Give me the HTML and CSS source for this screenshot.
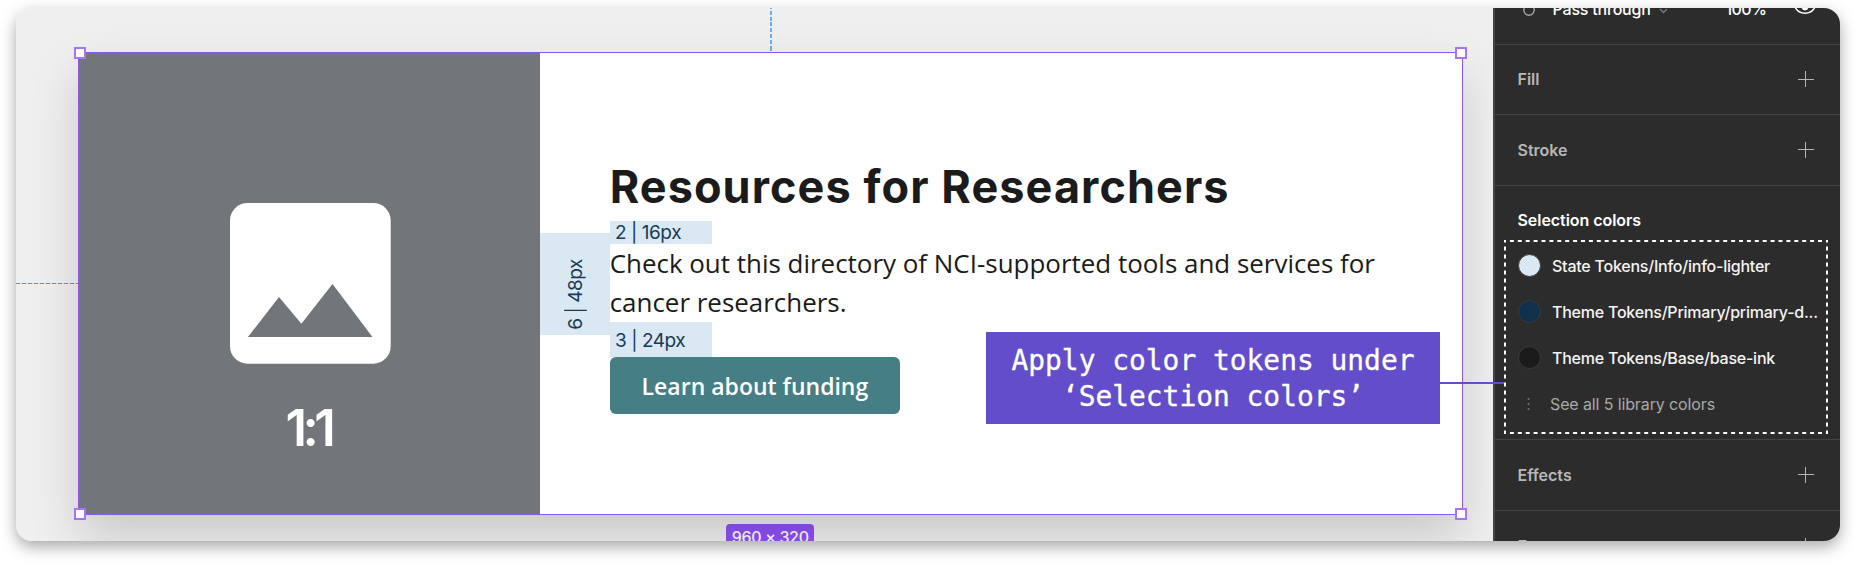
FILE: index.html
```html
<!DOCTYPE html>
<html lang="en">
<head>
<meta charset="utf-8">
<title>Selection colors</title>
<link rel="stylesheet" href="styles.css">
</head>
<body>
<main class="screen">
  <section class="canvas">
    <i class="guide guide-x"></i>
    <i class="guide guide-y"></i>
    <article class="card">
      <div class="media">
        <svg class="picture" width="161" height="161" viewBox="0 0 161 161"><rect width="160.7" height="160.7" rx="17.5" fill="#fff"/><path d="M17.9 134 49 94l22.4 26.7L102.5 81l40 53z" fill="#72767b"/></svg>
        <span class="ratio">1:1</span>
      </div>
      <div class="gutter"><div class="space space-side"><span>6 | 48px</span></div></div>
      <div class="content">
        <h1 class="title">Resources for Researchers</h1>
        <div class="space space-two">2 | 16px</div>
        <p class="copy">Check out this directory of NCI-supported tools and services for<br>cancer researchers.</p>
        <div class="space space-three">3 | 24px</div>
        <a class="button">Learn about funding</a>
      </div>
      <div class="selection"><i class="handle nw"></i><i class="handle ne"></i><i class="handle sw"></i><i class="handle se"></i></div>
    </article>
    <div class="size"><span>960 × 320</span></div>
  </section>
  <aside class="panel">
    <div class="row blend">
      <svg class="drop" width="14" height="20" viewBox="0 0 14 20"><path d="M7 2C5 6 1.8 9 1.8 13a5.2 5.2 0 0 0 10.4 0C12.200 9 9 6 7 2z" fill="none" stroke="#a5a5a5" stroke-width="1.4"/></svg>
      <span class="mode">Pass through</span>
      <svg class="chevron" width="9" height="6" viewBox="0 0 9 6"><path d="M1 1l3.500 3.500L8 1" fill="none" stroke="#7d7d7d" stroke-width="1.300"/></svg>
      <span class="opacity">100%</span>
      <svg class="eye" width="22" height="16" viewBox="0 0 22 16"><path d="M1 8c2-4 6-6.500 10-6.500S19 4 21 8c-2 4-6 6.200-10 6.200S3 12 1 8z" fill="none" stroke="#fff" stroke-width="1.500"/><circle cx="11" cy="8" r="3.400" fill="#fff"/></svg>
    </div>
    <div class="row"><span>Fill</span><i class="plus"></i></div>
    <div class="row"><span>Stroke</span><i class="plus"></i></div>
    <div class="colors">
      <h2 class="heading">Selection colors</h2>
      <div class="list">
        <svg class="outline" width="324" height="194" viewBox="0 0 324 194"><path d="M0 1h324M0 193h324" stroke-dasharray="4 3.900" stroke-dashoffset="2" stroke="#fff" stroke-width="2"/><path d="M1 0v194M323 0v194" stroke-dasharray="4 4" stroke-dashoffset="1.500" stroke="#fff" stroke-width="2"/></svg>
        <div class="item"><i class="swatch lighter"></i>State Tokens/Info/info-lighter</div>
        <div class="item"><i class="swatch primary"></i>Theme Tokens/Primary/primary-d...</div>
        <div class="item"><i class="swatch ink"></i>Theme Tokens/Base/base-ink</div>
        <div class="item more"><svg width="22" height="14" viewBox="0 0 22 14" fill="#777"><circle cx="10.500" cy="2" r="1"/><circle cx="10.500" cy="7" r="1"/><circle cx="10.500" cy="12" r="1"/></svg>See all 5 library colors</div>
      </div>
    </div>
    <div class="row"><span>Effects</span><i class="plus"></i></div>
    <div class="row last"><span>Export</span><i class="plus"></i></div>
  </aside>
  <div class="callout">Apply color tokens under<br>‘Selection colors’</div>
</main>
</body>
</html>
```
FILE: styles.css
```css
* { box-sizing: border-box; }
body { margin: 0; padding: 8px 16px; height: 565px; overflow: hidden; background: #fff; font-family: Inter, sans-serif; }
.screen { position: relative; display: flex; width: 1824px; height: 532.5px; border-radius: 16px; overflow: hidden; }
body::before { content: ""; position: absolute; z-index: -1; left: 16px; top: 8px; width: 1824px; height: 532.5px; border-radius: 16px; box-shadow: 0 6px 16px rgba(0,0,0,.34); }

.canvas { position: relative; flex: none; width: 1477px; padding: 44.700px 0 0 63.200px; background: #efefef; overflow: hidden; }
.guide { position: absolute; }
.guide-x { left: 0; top: 275px; width: 62px; height: 1px; background: repeating-linear-gradient(90deg, #4a98ec 0 4px, #d5e4f4 4px 6px); }
.guide-y { left: 754px; top: 0; width: 2px; height: 43px; background: repeating-linear-gradient(#64aef8 0 4px, #efefef 4px 5.800px); background-position-y: -3px; }

.card { position: relative; display: flex; width: 1383.300px; height: 461.500px; background: #fff; box-shadow: 0 23px 46px rgba(0,0,0,.16); }
.selection { position: absolute; inset: -1px -.5px -1px -1px; border: 1.500px solid #9254f7; }
.handle { position: absolute; width: 12px; height: 12px; border: 2px solid #a673fa; background: #fff; }
.nw { left: -5px; top: -6px; }
.ne { right: -5px; top: -6px; }
.sw { left: -5px; bottom: -6px; }
.se { right: -5px; bottom: -6px; }

.media { flex: none; width: 461.300px; padding-top: 150.300px; display: flex; flex-direction: column; align-items: center; background: #72767b; }
.picture { flex: none; margin-left: 1.500px; }
.ratio { margin: 33px 3px 0 0; font-size: 51px; line-height: 62px; font-weight: 600; letter-spacing: -4.500px; color: #fff; }

.gutter { flex: none; width: 69.200px; display: flex; align-items: center; }
.space { background: #d9e8f2; color: #183b57; font-size: 19px; letter-spacing: -.45px; }
.space-side { width: 100%; height: 102px; margin-top: 2px; display: flex; align-items: center; justify-content: center; }
.space-side span { writing-mode: vertical-rl; transform: rotate(180deg); padding: 0 0 19px; }
.content { padding-top: 108px; }
.title { margin: 0; height: 60.700px; line-height: 52px; font-size: 45px; font-weight: 700; letter-spacing: 1.080px; color: #1b1b1b; white-space: nowrap; }
.space-two, .space-three { width: 102px; padding-left: 5.300px; }
.space-two { height: 22.900px; line-height: 23px; }
.space-three { height: 34.700px; line-height: 37px; }
.copy { margin: 0; height: 77.900px; font: 25.950px/38.700px "Open Sans", sans-serif; color: #1b1b1b; white-space: nowrap; }
.button { display: flex; align-items: center; justify-content: center; width: 290.500px; height: 57.500px; border-radius: 5.800px; background: #457e84; color: #fff; font: 600 23px "Open Sans", sans-serif; }

.size { display: flex; justify-content: center; margin: 9.800px 0 0 646.800px; width: 88.500px; height: 28px; border-radius: 4px; background: #8f51f7; color: #fff; font-size: 16px; letter-spacing: -.35px; line-height: 26px; font-weight: 500; white-space: nowrap; }

.panel { flex: none; width: 347px; border-left: 2px solid #444; background: #2c2c2c; color: #fff; font-size: 16px; }
.row { display: flex; align-items: center; justify-content: space-between; height: 70.500px; padding: 0 26.500px 0 22.500px; border-bottom: 1.500px solid #444; color: #b8b8b8; font-weight: 600; }
.blend { height: 36.500px; justify-content: flex-start; align-items: flex-start; color: #fff; font-weight: 500; line-height: 20px; padding-left: 27px; letter-spacing: -.2px; }
.blend > * { flex: none; margin-top: -9px; }
.blend .drop { margin-top: -11px; }
.blend .mode { width: 100px; margin-left: 16.500px; }
.blend .chevron { margin: 0 0 0 6px; }
.blend .opacity { width: 40px; margin-left: 58px; letter-spacing: -.6px; }
.blend .eye { margin: -9px 0 0 28px; }
.plus { width: 16px; height: 16px; background: linear-gradient(#b5b5b5, #b5b5b5) 50% / 16px 1.200px no-repeat, linear-gradient(#b5b5b5, #b5b5b5) 50% / 1.200px 16px no-repeat; }
.colors { height: 254.500px; padding: 24px 0 0 9px; border-bottom: 1.500px solid #444; }
.heading { margin: 0 0 10px 13.500px; font-size: 16px; line-height: 20px; font-weight: 600; letter-spacing: -.05px; }
.list { position: relative; width: 324px; height: 194px; padding: 3px 0 0 13.500px; }
.outline { position: absolute; left: 0; top: 0; }
.item { display: flex; align-items: center; gap: 11.500px; height: 46px; font-size: 16px; letter-spacing: -.23px; font-weight: 500; color: #f4f4f4; white-space: nowrap; }
.swatch { flex: none; width: 23px; height: 23px; border-radius: 50%; border: 1px solid #3b3b3b; }
.lighter { background: #d9e8f3; }
.primary { background: #11304b; }
.ink { background: #1b1b1b; }
.more { gap: 10.500px; color: #a9a9a9; font-weight: 400; letter-spacing: -.12px; }
.last { border: 0; }

.callout { position: absolute; left: 970px; top: 324px; width: 454px; height: 92px; padding-top: 10.500px; background: #634dca; color: #fff; text-align: center; font: 27.900px/36px "DejaVu Sans Mono", monospace; -webkit-text-stroke: .3px #fff; }
.callout::after { content: ""; position: absolute; left: 454px; top: 50px; width: 64px; height: 2px; background: #634dca; }
```
